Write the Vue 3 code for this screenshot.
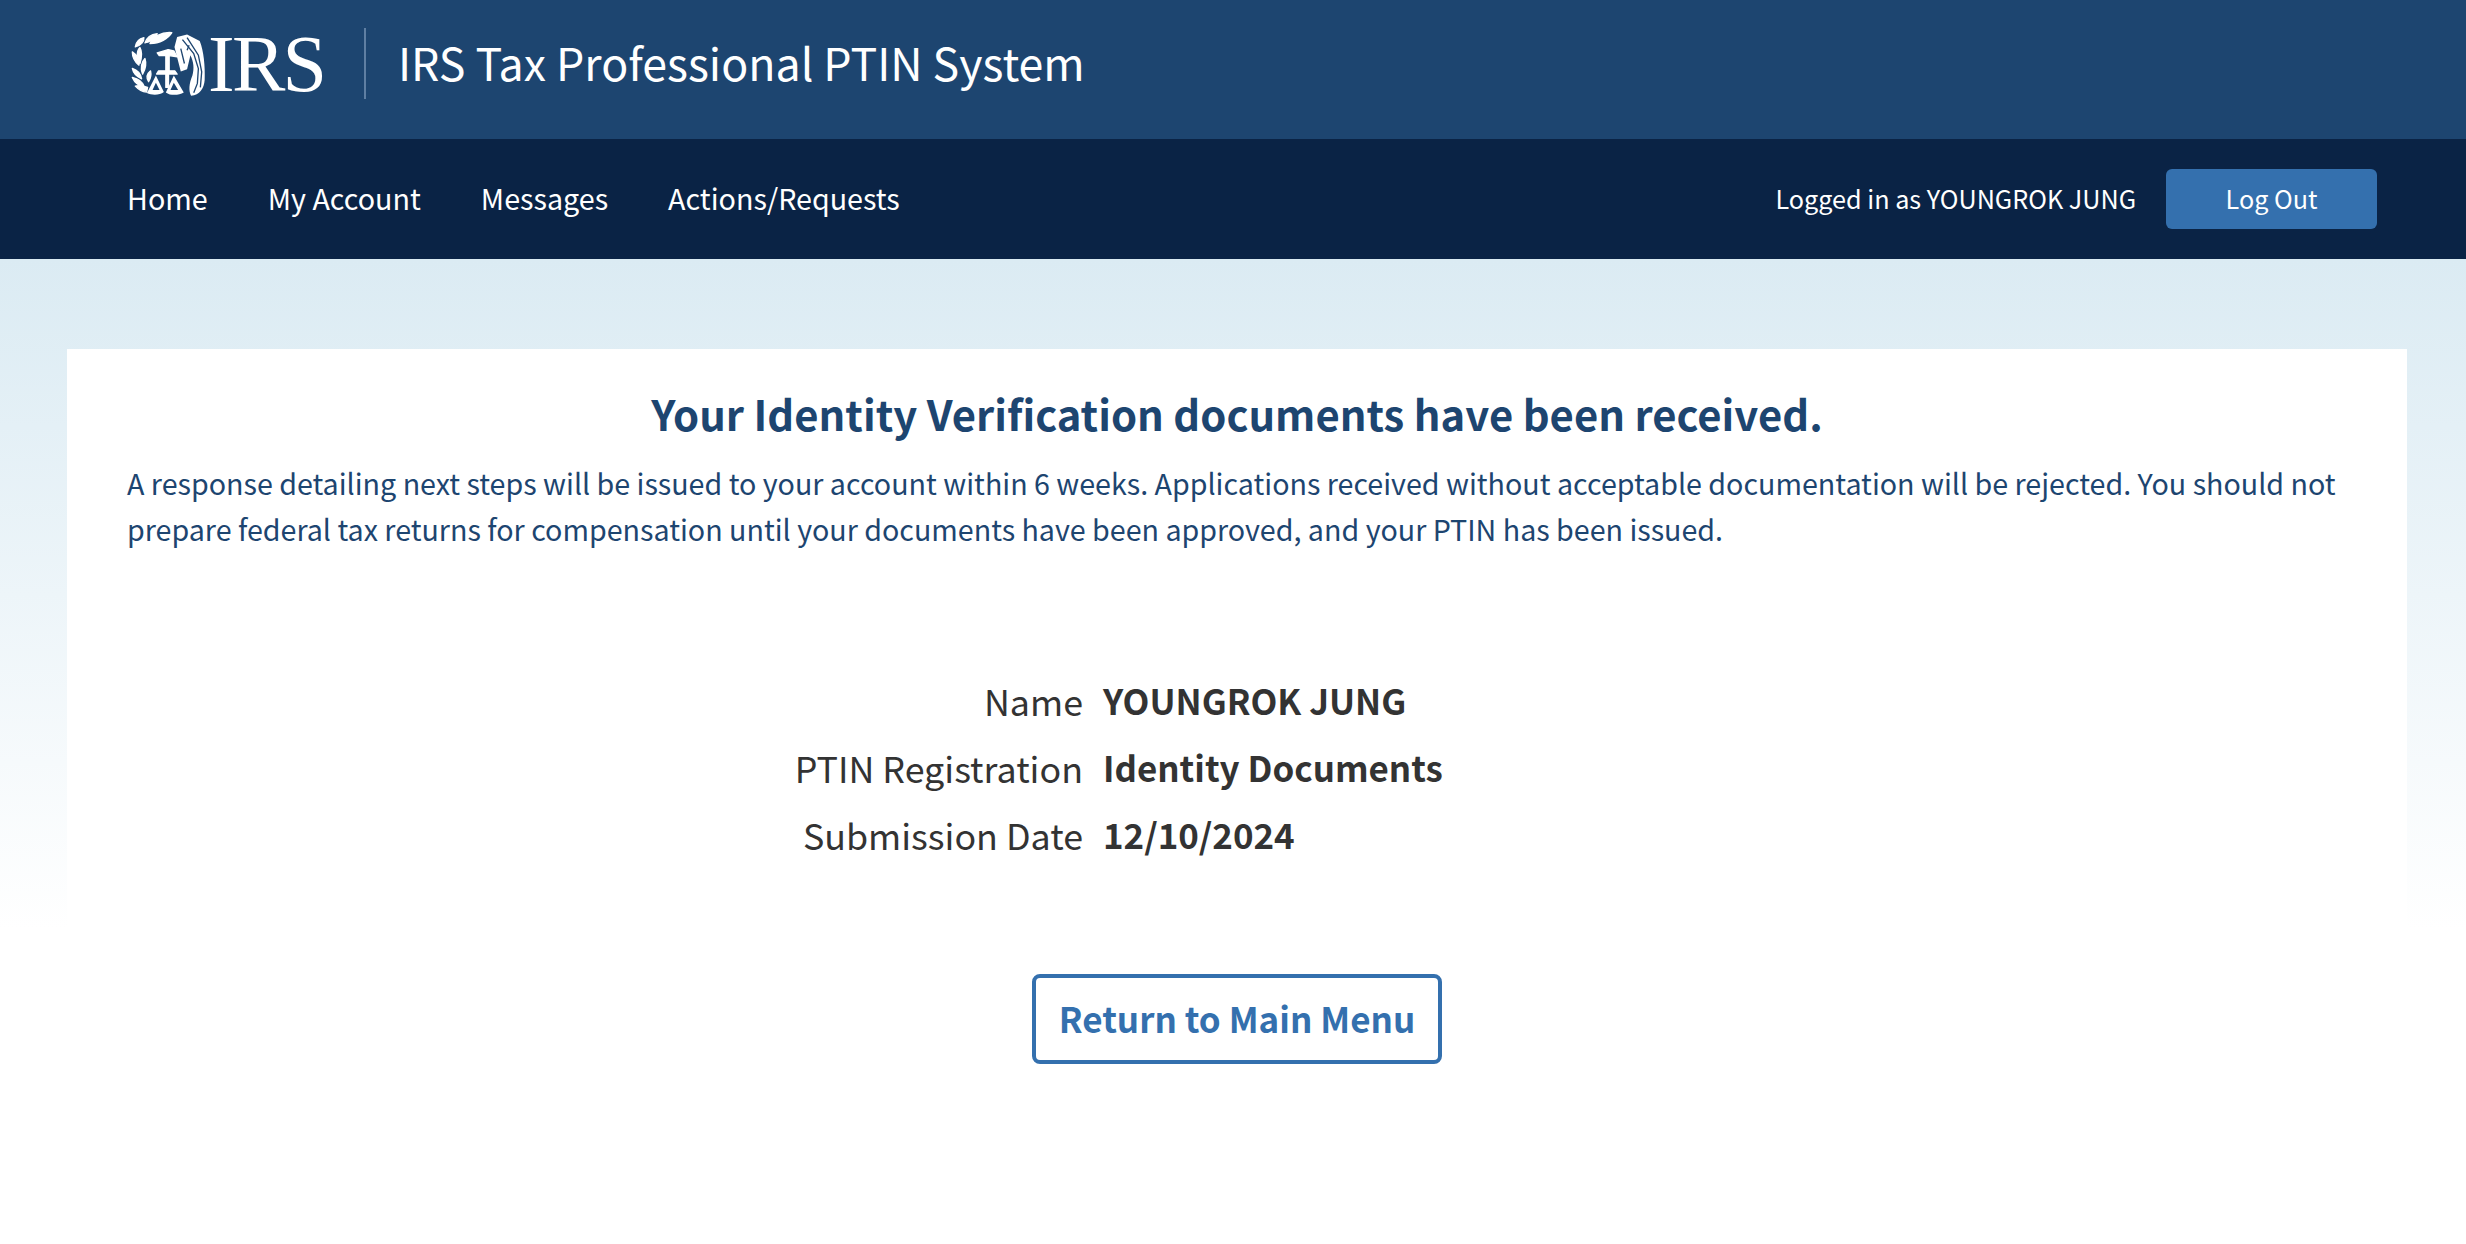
<script setup>
const rows = [
  { label: 'Name', value: 'YOUNGROK JUNG' },
  { label: 'PTIN Registration', value: 'Identity Documents' },
  { label: 'Submission Date', value: '12/10/2024' }
]
const links = ['Home', 'My Account', 'Messages', 'Actions/Requests']
</script>

<template>
  <div class="page">
    <header class="top">
      <div class="logo">
        <svg class="seal" viewBox="90 90 235 200" width="78" height="67" aria-hidden="true">
          <g fill="#fff" stroke="#fff" stroke-width="4" stroke-linejoin="round">
            <path d="M150 130C165 105 190 95 216 97 205 115 180 130 150 130Z"/>
            <path d="M135 128C140 112 155 102 172 100 168 115 155 125 135 128Z"/>
            <path d="M106 140C108 125 118 115 132 112 133 125 122 136 106 140Z"/>
            <path d="M120 190C126 170 126 152 120 142 110 152 108 175 120 190Z"/>
            <path d="M97 155C97 172 105 185 117 195 120 178 112 165 97 155Z"/>
            <path d="M128 222C138 205 140 190 135 175 125 185 120 205 128 222Z"/>
            <path d="M97 205C100 220 110 230 125 236 122 220 112 210 97 205Z"/>
            <path d="M146 245C152 235 155 225 152 212 142 220 138 232 146 245Z"/>
            <path d="M97 232C105 250 118 258 133 260 128 245 115 236 97 232Z"/>
            <path d="M106 258C115 268 125 275 140 276L143 262C130 257 118 255 106 258Z"/>
            <path d="M172 158L205 148 222 152 232 170 208 166V212H225L232 222H206V262H198V222H170L176 212H198V166H178Z"/>
          </g>
          <g fill="#fff">
            <path fill-rule="evenodd" d="M168 226L192 276C180 286 155 286 141 279ZM168 248L158 270H179Z"/>
            <path fill-rule="evenodd" d="M222 226L252 277C238 286 212 288 198 277ZM222 248L212 270H235Z"/>
            <path d="M232 110L262 103 300 122C312 150 317 200 315 240 313 265 300 286 274 287 266 272 268 250 278 226 284 205 282 185 272 165L262 207 243 214 224 140Z"/>
          </g>
          <g fill="none" stroke="#1d4570" stroke-width="4">
            <path d="M248 118L282 160 296 205 293 250 282 278"/>
            <path d="M262 112L296 165 306 215 302 262"/>
            <path d="M243 145L254 190M262 150L268 135"/>
          </g>
        </svg>
        <span class="irs">IRS</span>
      </div>
      <span class="divider"></span>
      <span class="system">IRS Tax Professional PTIN System</span>
    </header>
    <nav class="nav">
      <div class="links">
        <a v-for="l in links" :key="l">{{ l }}</a>
      </div>
      <div class="user">
        <span class="logged">Logged in as YOUNGROK JUNG</span>
        <button class="logout">Log Out</button>
      </div>
    </nav>
    <main class="main">
      <section class="card">
        <h1>Your Identity Verification documents have been received.</h1>
        <p>A response detailing next steps will be issued to your account within 6 weeks. Applications received without acceptable documentation will be rejected. You should not prepare federal tax returns for compensation until your documents have been approved, and your PTIN has been issued.</p>
        <dl class="info">
          <template v-for="r in rows" :key="r.label">
            <dt>{{ r.label }}</dt>
            <dd>{{ r.value }}</dd>
          </template>
        </dl>
        <button class="back">Return to Main Menu</button>
      </section>
    </main>
  </div>
</template>

<style>
html, body { margin: 0; background: #fff; }
</style>

<style scoped>
.page {
  height: 1244px;
  overflow: hidden;
  display: flex;
  flex-direction: column;
  font-family: "Noto Sans CJK SC", "Noto Sans CJK JP", sans-serif;
}
.top {
  height: 139px;
  background: #1d4570;
  display: flex;
  align-items: center;
  padding: 0 0 12px 130px;
  box-sizing: border-box;
  color: #fff;
}
.logo { display: flex; align-items: center; width: 234px; }
.seal { flex: none; }
.irs {
  font-family: "Liberation Serif", serif;
  font-size: 80px;
  line-height: 80px;
  letter-spacing: -2.7px;
}
.divider { width: 2px; height: 71px; background: #5f7fa3; }
.system {
  margin-left: 32px;
  padding-bottom: 4px;
  font-size: 44.7px;
  line-height: 60px;
}
.nav {
  height: 120px;
  background: #0a2345;
  color: #fff;
  display: flex;
  align-items: center;
  justify-content: space-between;
  padding: 0 89px 0 127px;
}
.links { display: flex; gap: 60px; font-size: 28.7px; padding-bottom: 3px; }
.user { display: flex; align-items: center; gap: 30px; }
.logged { font-size: 25.2px; padding-bottom: 2px; }
.logout {
  width: 211px;
  height: 60px;
  padding: 0 0 3px;
  border: 0;
  border-radius: 6px;
  background: #3470ae;
  color: #fff;
  font: inherit;
  font-size: 25.2px;
}
.main {
  flex: 1;
  padding: 90px 59px 0 67px;
  background: linear-gradient(#dbebf3 0, #fff 670px);
}
.card {
  padding: 28px 60px 0;
  background: #fff;
  display: flex;
  flex-direction: column;
  align-items: center;
}
h1 {
  margin: 0;
  font-size: 41.8px;
  font-weight: 700;
  line-height: 72px;
  color: #1d4570;
  text-align: center;
}
p {
  margin: 11px 0 0;
  font-size: 28.65px;
  line-height: 46px;
  color: #1d4570;
  align-self: stretch;
}
.info {
  margin: 115px 0 0;
  display: grid;
  grid-template-columns: 956px 1fr;
  column-gap: 20px;
  align-self: stretch;
  font-size: 35.8px;
  line-height: 67px;
  color: #333;
}
dt { text-align: right; }
dd { margin: 0; font-weight: 700; font-size: 34.9px; }
.back {
  margin-top: 106px;
  width: 410px;
  height: 90px;
  padding: 0 0 4px;
  border: 4px solid #3470ae;
  border-radius: 8px;
  background: #fff;
  color: #3470ae;
  font: inherit;
  font-size: 35px;
  font-weight: 700;
}
</style>
